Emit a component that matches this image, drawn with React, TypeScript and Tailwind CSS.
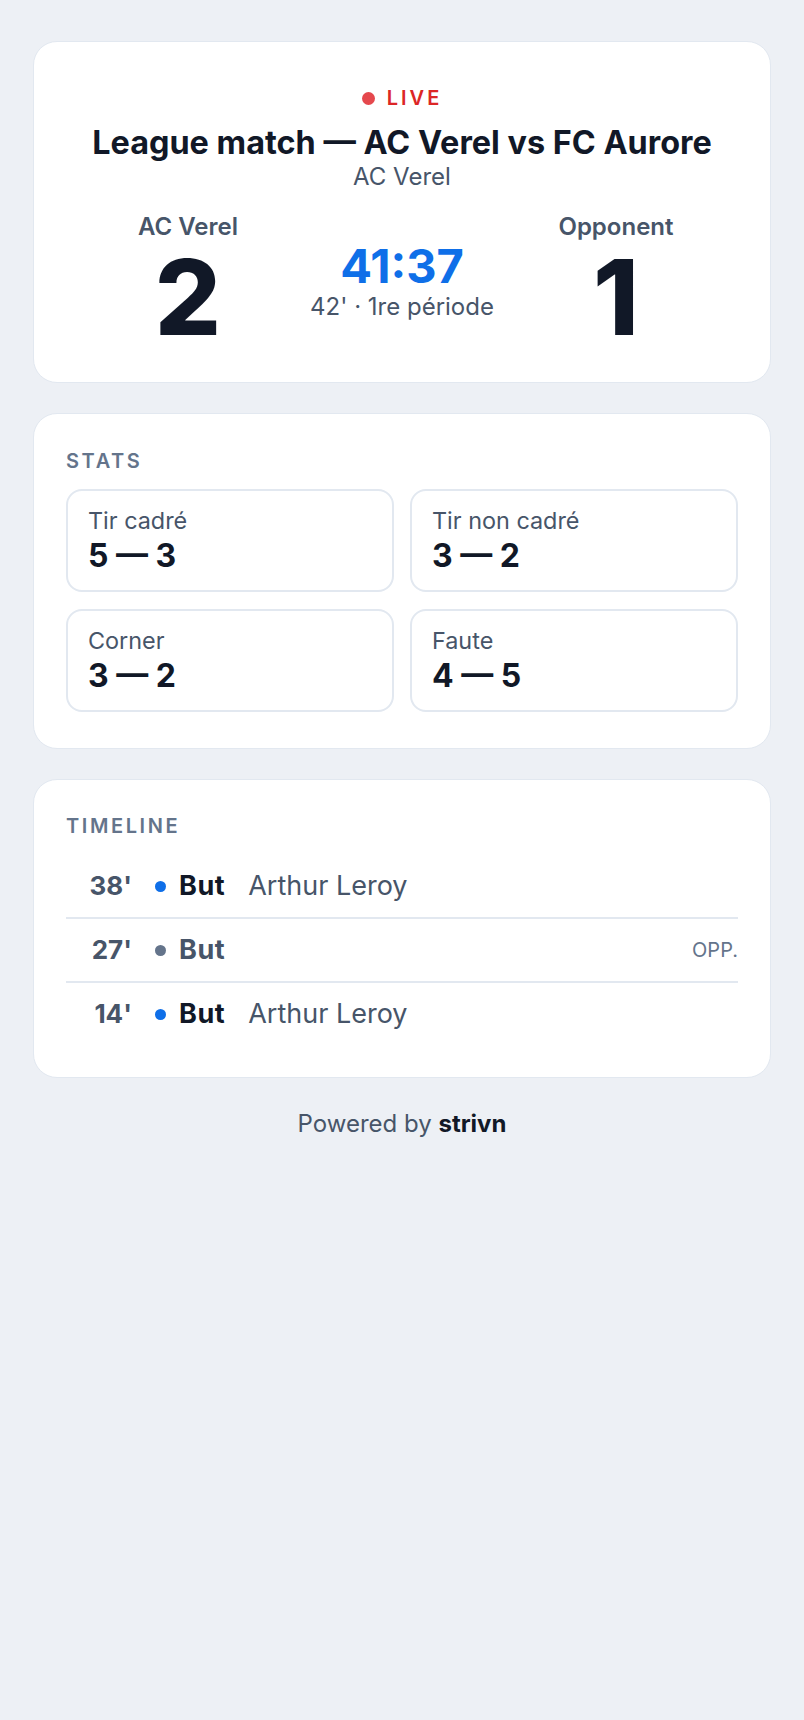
import React from "react";

const stats = [
  { label: "Tir cadré", home: 5, away: 3 },
  { label: "Tir non cadré", home: 3, away: 2 },
  { label: "Corner", home: 3, away: 2 },
  { label: "Faute", home: 4, away: 5 },
];

const events = [
  { minute: "38'", type: "But", player: "Arthur Leroy", ours: true },
  { minute: "27'", type: "But", player: "", ours: false },
  { minute: "14'", type: "But", player: "Arthur Leroy", ours: true },
];

const Card = ({ children, className = "" }: { children: React.ReactNode; className?: string }) => (
  <section className={"rounded-[24px] border border-[#e2e8f0] bg-white px-8 " + className}>{children}</section>
);

const App = () => {
  return (
    <div
      className="min-h-[1720px] bg-[#edf0f5] px-[33px] pt-[41px] text-[#111827]"
      style={{ fontFamily: "Inter, 'Noto Sans', sans-serif" }}
    >
      <div className="flex flex-col gap-[30px]">
        {/* score header */}
        <Card className="pt-[44px] pb-[33px]">
          <div className="flex h-6 items-center justify-center gap-[12px]">
            <span className="h-[13px] w-[13px] rounded-full bg-[#e5484d]" />
            <span className="text-[20px] leading-6 font-semibold tracking-[0.15em] text-[#dc2626]">LIVE</span>
          </div>
          <h1 className="mt-[13px] text-center text-[32.4px] leading-10 font-bold">
            League match — AC Verel vs FC Aurore
          </h1>
          <p className="text-center text-[24px] leading-7 text-[#475569]">AC Verel</p>
          <div className="mt-[22px] grid grid-cols-[1fr_auto_1fr] items-center">
            <div className="flex flex-col items-center">
              <span className="text-[24px] leading-7 font-semibold text-[#475569]">AC Verel</span>
              <span className="mt-1 text-[104px] leading-none font-extrabold">2</span>
            </div>
            <div className="flex flex-col items-center">
              <span className="text-[47px] leading-none font-bold text-[#0f6fe8]">41:37</span>
              <span className="mt-1 text-[24px] leading-7 text-[#475569]">42' · 1re période</span>
            </div>
            <div className="flex flex-col items-center">
              <span className="text-[24px] leading-7 font-semibold text-[#475569]">Opponent</span>
              <span className="mt-1 text-[104px] leading-none font-extrabold">1</span>
            </div>
          </div>
        </Card>

        {/* stats */}
        <Card className="pt-[33px] pb-[36px]">
          <h2 className="text-[20px] leading-7 font-semibold tracking-[0.13em] text-[#64748b]">STATS</h2>
          <div className="mt-[14px] grid grid-cols-2 gap-x-4 gap-y-[17px]">
            {stats.map((s) => (
              <div key={s.label} className="rounded-[16px] border-2 border-[#e2e8f0] px-5 pt-4 pb-4">
                <div className="text-[23.4px] leading-7 text-[#475569]">{s.label}</div>
                <div className="mt-[3px] text-[32px] leading-9 font-bold">
                  {s.home} — {s.away}
                </div>
              </div>
            ))}
          </div>
        </Card>

        {/* timeline */}
        <Card className="pt-8 pb-[32px]">
          <h2 className="text-[20px] leading-7 font-semibold tracking-[0.13em] text-[#64748b]">TIMELINE</h2>
          <ul className="mt-[15px]">
            {events.map((e, i) => (
              <li
                key={i}
                className={
                  "flex items-center py-[15px] text-[27px] leading-8 " +
                  (i < events.length - 1 ? "border-b-2 border-[#e2e8f0]" : "")
                }
              >
                <span className="w-[66px] text-right text-[26px] font-bold text-[#475569]">{e.minute}</span>
                <span
                  className={
                    "ml-[23px] h-[11px] w-[11px] shrink-0 rounded-full " +
                    (e.ours ? "bg-[#0f6fe8]" : "bg-[#64748b]")
                  }
                />
                <span
                  className={
                    "ml-[13px] font-bold tracking-[0.02em] " + (e.ours ? "text-[#111827]" : "text-[#475569]")
                  }
                >
                  {e.type}
                </span>
                {e.player && <span className="ml-[23px] text-[#475569]">{e.player}</span>}
                {!e.ours && <span className="ml-auto text-[20px] text-[#64748b]">OPP.</span>}
              </li>
            ))}
          </ul>
        </Card>

        <p className="text-center text-[24px] leading-8 text-[#475569]">
          Powered by <span className="font-bold text-[#111827]">strivn</span>
        </p>
      </div>
    </div>
  );
};

export default App;
